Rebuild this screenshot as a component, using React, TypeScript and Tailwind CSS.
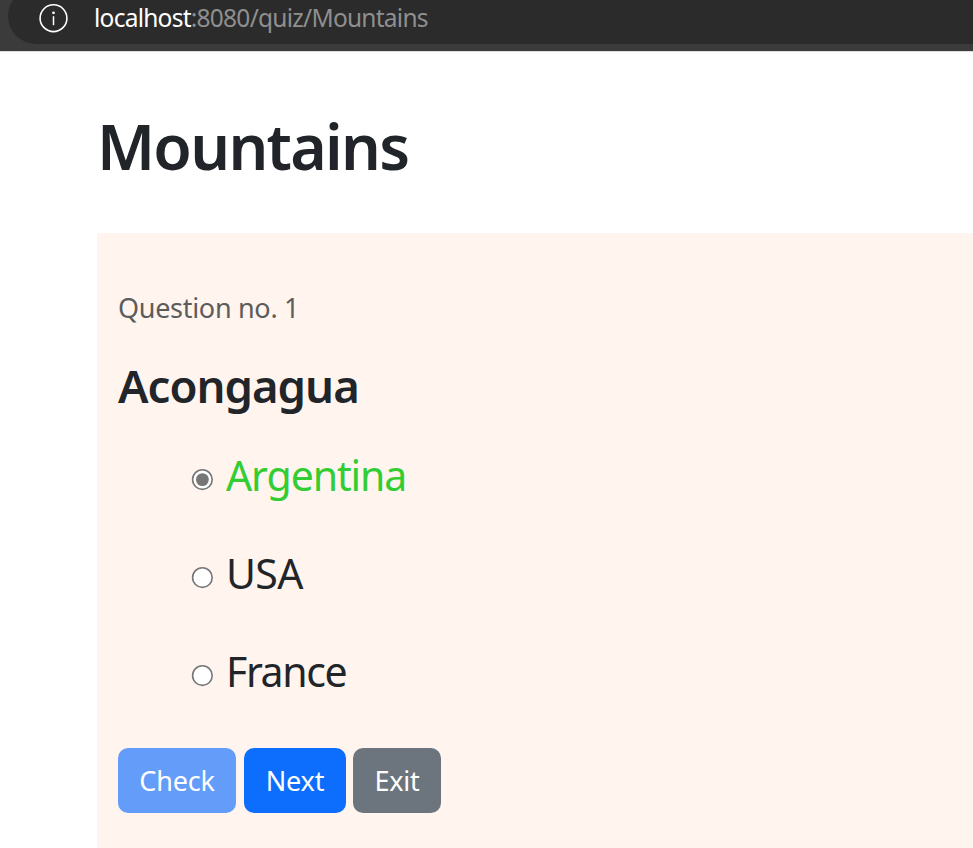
const options = [
  { label: 'Argentina', checked: true, style: 'text-[#32cd32] tracking-[-1.1px]' },
  { label: 'USA', checked: false, style: 'text-[#212529] tracking-[-0.6px]' },
  { label: 'France', checked: false, style: 'text-[#212529] tracking-[-1.4px]' },
];

function Radio({ checked }: { checked: boolean }) {
  return (
    <svg viewBox="0 0 22 22" className="mt-[9px] h-[22px] w-[22px] shrink-0" aria-hidden="true">
      <circle cx="11.4" cy="10.6" r="9.8" fill="#fff" stroke="#767676" strokeWidth="1.6" />
      {checked && <circle cx="11.4" cy="10.6" r="6.4" fill="#767676" />}
    </svg>
  );
}

function AddressBar() {
  return (
    <header className="h-[52px] overflow-hidden border-b border-[#dedede] bg-[#3b3b3b] pl-2">
      <div className="-mt-3 flex h-14 items-start rounded-l-full bg-[#2b2b2b] pl-[31px] pt-3">
        <svg viewBox="0 0 30 30" className="mt-[3px] h-[30px] w-[30px] shrink-0" fill="none" stroke="#fff">
          <circle cx="14.5" cy="15.2" r="13.4" strokeWidth="1.6" />
          <path d="M14.5 13.2v9" strokeWidth="1.5" />
          <circle cx="14.5" cy="9.8" r="1.4" fill="#fff" stroke="none" />
        </svg>
        <div className="ml-[25px] flex whitespace-nowrap text-[24.5px] leading-[36px] tracking-[-0.75px] text-[#8f8f8f]">
          <span className="text-white">localhost</span>
          <span>:8080/quiz/Mountains</span>
        </div>
      </div>
    </header>
  );
}

export default function App() {
  return (
    <div className="h-[848px] overflow-hidden bg-white font-['Noto_Sans',sans-serif] text-[#212529]">
      <AddressBar />
      <main className="pl-[97px]">
        <h1 className="pt-14 text-[62.5px] font-[560] leading-[76px] tracking-[-1.7px]">
          <span>Mountains</span>
        </h1>
        <section className="mt-[49px] h-[615px] bg-[#fff4ee] pl-[21px] pt-[55px]">
          <p className="text-[27px] leading-[40px] tracking-[-0.3px] text-[#5c5c5c]">
            <span>Question no. 1</span>
          </p>
          <h2 className="mt-[29px] text-[45.5px] font-[570] leading-[56px] tracking-[-1px]">
            <span>Acongagua</span>
          </h2>
          <div className="mt-[31px] flex flex-col gap-9 pl-[73px]">
            {options.map((o) => (
              <label key={o.label} className="flex h-[62px] items-center">
                <Radio checked={o.checked} />
                <span className={`ml-[13px] text-[41px] leading-[62px] ${o.style}`}>{o.label}</span>
              </label>
            ))}
          </div>
          <div className="mt-[46px] flex text-[27px] leading-[65px] tracking-[-0.2px] text-white">
            <button className="h-[65px] w-[118px] rounded-[10px] bg-[#639cf9]">Check</button>
            <button className="ml-2 h-[65px] w-[102px] rounded-[10px] bg-[#0d6efd]">Next</button>
            <button className="ml-[7px] h-[65px] w-[88px] rounded-[10px] bg-[#6c757d]">Exit</button>
          </div>
        </section>
      </main>
    </div>
  );
}
